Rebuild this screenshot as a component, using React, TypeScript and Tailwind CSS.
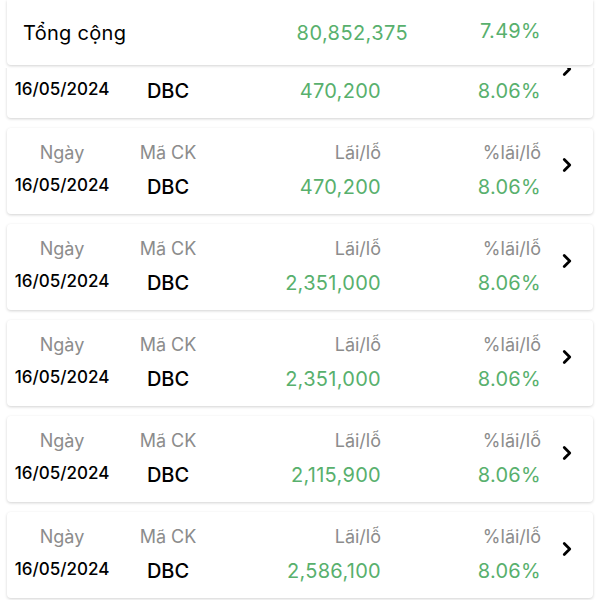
import { ChevronRight } from "lucide-react";

type Row = { date: string; code: string; pnl: string; pct: string };

const rows: Row[] = [
  { date: "16/05/2024", code: "DBC", pnl: "470,200", pct: "8.06%" },
  { date: "16/05/2024", code: "DBC", pnl: "470,200", pct: "8.06%" },
  { date: "16/05/2024", code: "DBC", pnl: "2,351,000", pct: "8.06%" },
  { date: "16/05/2024", code: "DBC", pnl: "2,351,000", pct: "8.06%" },
  { date: "16/05/2024", code: "DBC", pnl: "2,115,900", pct: "8.06%" },
  { date: "16/05/2024", code: "DBC", pnl: "2,586,100", pct: "8.06%" },
];

const font = "font-['Inter','Roboto',sans-serif]";

function RowCard({ row }: { row: Row }) {
  return (
    <div className="mx-[7px] h-[86px] rounded-[4px] bg-white shadow-[0_1px_3px_rgba(0,0,0,0.18)] grid grid-cols-[110px_102px_162px_160px_1fr] grid-rows-[34px_34px] pt-[8px]">
      <div className="text-center text-[18px] text-[#8c8c8c] leading-[34px]">Ngày</div>
      <div className="text-center text-[18px] text-[#8c8c8c] leading-[34px]">Mã CK</div>
      <div className="text-right text-[18px] text-[#8c8c8c] leading-[34px]">Lãi/lỗ</div>
      <div className="text-right text-[18px] text-[#8c8c8c] leading-[34px]">%lãi/lỗ</div>
      <div className="row-span-2 flex items-center justify-center pb-[10px]">
        <ChevronRight className="w-[22px] h-[22px] text-black" strokeWidth={3} />
      </div>
      <div className="text-center text-[17px] font-medium text-black leading-[30px]">{row.date}</div>
      <div className="text-center text-[20px] font-medium text-black leading-[34px]">{row.code}</div>
      <div className="text-right text-[20px] tracking-[0.3px] text-[#58b06d] leading-[34px]">{row.pnl}</div>
      <div className="text-right text-[20px] tracking-[0.3px] text-[#58b06d] leading-[34px]">{row.pct}</div>
    </div>
  );
}

export default function App() {
  return (
    <div className={`w-[600px] h-[600px] overflow-hidden bg-white ${font}`}>
      <div className="relative z-10 bg-white pb-[3px]">
        <div className="mx-[7px] h-[65px] rounded-b-[4px] bg-white shadow-[0_1px_3px_rgba(0,0,0,0.18)] flex items-center">
          <span className="ml-[16px] text-[20px] text-black w-[250px] tracking-[0.3px]">Tổng cộng</span>
          <span className="w-[135px] text-right text-[20px] tracking-[0.4px] text-[#58b06d]">80,852,375</span>
          <span className="w-[133px] text-right text-[20px] tracking-[0.3px] text-[#58b06d] -mt-[4px]">7.49%</span>
        </div>
      </div>
      <div className="-mt-[36px] flex flex-col gap-[10px]">
        {rows.map((r, i) => (
          <RowCard key={i} row={r} />
        ))}
      </div>
    </div>
  );
}
